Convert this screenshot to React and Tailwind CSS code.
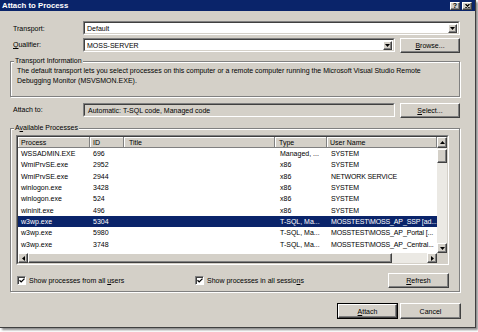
import React from "react";

const processes = [
  ["WSSADMIN.EXE", "696", "", "Managed, ...", "SYSTEM"],
  ["WmiPrvSE.exe", "2952", "", "x86", "SYSTEM"],
  ["WmiPrvSE.exe", "2944", "", "x86", "NETWORK SERVICE"],
  ["winlogon.exe", "3428", "", "x86", "SYSTEM"],
  ["winlogon.exe", "524", "", "x86", "SYSTEM"],
  ["wininit.exe", "496", "", "x86", "SYSTEM"],
  ["w3wp.exe", "5304", "", "T-SQL, Ma...", "MOSSTEST\\MOSS_AP_SSP [ad...", true],
  ["w3wp.exe", "5980", "", "T-SQL, Ma...", "MOSSTEST\\MOSS_AP_Portal [..."],
  ["w3wp.exe", "3748", "", "T-SQL, Ma...", "MOSSTEST\\MOSS_AP_Central..."],
  ["w3wp.exe", "2116", "", "x86", "MOSSTEST\\administrator"],
];

const Tri = ({ dir }) => {
  const side = dir === "left" || dir === "right";
  const pts = {
    down: "0,0 5,0 2.5,3",
    up: "0,3 5,3 2.5,0",
    left: "3,0 3,5 0,2.5",
    right: "0,0 0,5 3,2.5",
  }[dir];
  return (
    <svg width={side ? 3 : 5} height={side ? 5 : 3} viewBox={side ? "0 0 3 5" : "0 0 5 3"}>
      <polygon points={pts} fill="#000" />
    </svg>
  );
};

const Raised = ({ className = "", children }) => (
  <div
    className={`flex items-center justify-center bg-[#d4d0c8] border border-t-white border-l-white border-r-[#404040] border-b-[#404040] shadow-[inset_-1px_-1px_0_#808080] ${className}`}
  >
    {children}
  </div>
);

const Sunken = ({ className = "", inner = "bg-white", children }) => (
  <div className={`border border-t-[#808080] border-l-[#808080] border-b-white border-r-white ${className}`}>
    <div
      className={`w-full h-full border border-t-[#404040] border-l-[#404040] border-b-[#d4d0c8] border-r-[#d4d0c8] flex items-center ${inner}`}
    >
      {children}
    </div>
  </div>
);

const Combo = ({ className, value }) => (
  <Sunken className={className}>
    <span className="pl-[2px] leading-none">{value}</span>
    <Raised className="ml-auto mr-[1px] w-[9px] h-[9px]">
      <Tri dir="down" />
    </Raised>
  </Sunken>
);

const GroupBox = ({ title, className = "", children }) => (
  <div
    className={`relative border border-[#808080] shadow-[inset_1px_1px_0_#ffffff,1px_1px_0_#ffffff] ${className}`}
  >
    <span className="absolute top-[-5px] left-[3px] px-[1px] bg-[#d4d0c8] leading-[8px]">{title}</span>
    {children}
  </div>
);

const Check = () => (
  <div className="w-[9px] h-[9px] bg-white border border-t-[#808080] border-l-[#808080] border-b-white border-r-white shadow-[inset_1px_1px_0_#404040] flex items-center justify-center">
    <svg width="6" height="5" viewBox="0 0 6 5">
      <polyline points="0.5,2.2 2.2,3.9 5.5,0.6" stroke="#000" strokeWidth="1.3" fill="none" />
    </svg>
  </div>
);

const cols = "grid grid-cols-[72px_34px_151px_52px_110px]";

const HeaderCell = ({ children, pad = "pl-[3px]" }) => (
  <div
    className={`h-[11px] flex items-center ${pad} bg-[#d4d0c8] border-r border-b border-r-[#808080] border-b-[#808080] shadow-[inset_1px_1px_0_#ffffff] leading-none`}
  >
    {children}
  </div>
);

export default function App() {
  return (
    <div className="w-[478px] h-[332px] bg-white overflow-hidden font-['Liberation_Sans',Arial,sans-serif] text-[7px] text-black">
      <div className="w-[476px] h-[328px] bg-[#d4d0c8] border-r border-b border-[#404040] shadow-[2px_2px_2px_rgba(0,0,0,0.45)] flex flex-col">
        {/* title bar */}
        <div className="h-[11px] bg-[#0a246a] flex items-center pl-[2px] pr-[3px]">
          <span className="text-white font-bold text-[7.8px] leading-none">Attach to Process</span>
          <div className="ml-auto flex gap-[2px]">
            <Raised className="w-[10px] h-[8px]">
              <span className="font-bold text-[7px] leading-none">?</span>
            </Raised>
            <Raised className="w-[10px] h-[8px]">
              <svg width="5" height="4" viewBox="0 0 5 4">
                <path d="M0.5 0 L4.5 4 M4.5 0 L0.5 4" stroke="#000" strokeWidth="1.2" />
              </svg>
            </Raised>
          </div>
        </div>

        <div className="pl-[10px] flex flex-col">
          {/* transport */}
          <div className="mt-[10px] flex items-center pl-[3px]">
            <span className="w-[70px] leading-none">Transport:</span>
            <Combo className="w-[377px] h-[14px]" value="Default" />
          </div>

          {/* qualifier */}
          <div className="mt-[3px] flex items-start pl-[3px]">
            <span className="w-[70px] leading-[14px]">
              <u className="underline-offset-1">Q</u>ualifier:
            </span>
            <Combo className="w-[312px] h-[14px]" value="MOSS-SERVER" />
            <Raised className="ml-[5px] w-[60px] h-[15px]">
              <span className="leading-none">
                <u className="underline-offset-1">B</u>rowse...
              </span>
            </Raised>
          </div>

          {/* transport info */}
          <GroupBox title="Transport Information" className="mt-[8px] w-[450px] h-[36px]">
            <p className="pl-[6px] pt-[4px] leading-[9.5px]">
              The default transport lets you select processes on this computer or a remote computer running the
              Microsoft Visual Studio Remote
              <br />
              Debugging Monitor (MSVSMON.EXE).
            </p>
          </GroupBox>

          {/* attach to */}
          <div className="mt-[6px] flex items-start pl-[3px]">
            <span className="w-[70px] leading-[14px]">Attach to:</span>
            <Sunken className="w-[312px] h-[14px]" inner="bg-[#d4d0c8]">
              <span className="pl-[3px] leading-none">Automatic: T-SQL code, Managed code</span>
            </Sunken>
            <Raised className="ml-[5px] w-[60px] h-[15px]">
              <span className="leading-none">
                <u className="underline-offset-1">S</u>elect...
              </span>
            </Raised>
          </div>

          {/* available processes */}
          <GroupBox
            title={
              <>
                A<u className="underline-offset-1">v</u>ailable Processes
              </>
            }
            className="mt-[10px] w-[450px] h-[164px]"
          >
            <div className="pt-[6px] pl-[5px]">
              <Sunken className="w-[433px] h-[130px]" inner="bg-white items-stretch">
                <div className="w-[419px] flex flex-col">
                  <div className={cols}>
                    <HeaderCell>Process</HeaderCell>
                    <HeaderCell>ID</HeaderCell>
                    <HeaderCell pad="pl-[5px]">Title</HeaderCell>
                    <HeaderCell pad="pl-[4px]">Type</HeaderCell>
                    <HeaderCell pad="pl-[3px]">User Name</HeaderCell>
                  </div>
                  <div className="h-[105px] overflow-hidden">
                    {processes.map((p, i) => (
                      <div
                        key={i}
                        className={`${cols} h-[11.33px] leading-[11.33px] whitespace-nowrap ${
                          p[5] ? "bg-[#0a246a] text-white" : ""
                        }`}
                      >
                        <span className="pl-[3px] overflow-hidden">{p[0]}</span>
                        <span className="pl-[3px] overflow-hidden">{p[1]}</span>
                        <span className="pl-[5px] overflow-hidden">{p[2]}</span>
                        <span className="pl-[5px] overflow-hidden">{p[3]}</span>
                        <span className="pl-[4px] overflow-hidden tracking-[-0.15px]">{p[4]}</span>
                      </div>
                    ))}
                  </div>
                  <div className="h-[10px] flex bg-[#ebe9e4]">
                    <Raised className="w-[10px] h-[10px]">
                      <Tri dir="left" />
                    </Raised>
                    <Raised className="w-[364px] h-[10px]" />
                    <div className="flex-1" />
                    <Raised className="w-[10px] h-[10px]">
                      <Tri dir="right" />
                    </Raised>
                  </div>
                </div>
                <div className="w-[10px] flex flex-col">
                  <div className="h-[116px] flex flex-col bg-[#ebe9e4]">
                    <Raised className="w-[10px] h-[11px]">
                      <Tri dir="up" />
                    </Raised>
                    <Raised className="w-[10px] h-[14px] mt-[1px]" />
                    <div className="flex-1" />
                    <Raised className="w-[10px] h-[10px]">
                      <Tri dir="down" />
                    </Raised>
                  </div>
                  <div className="h-[10px] bg-[#d4d0c8]" />
                </div>
              </Sunken>

              <div className="mt-[8px] h-[14px] flex items-center">
                <div className="w-[179px] flex items-center pl-[1px] gap-[3px]">
                  <Check />
                  <span className="leading-none">
                    Show processes from all <u className="underline-offset-1">u</u>sers
                  </span>
                </div>
                <div className="w-[193px] flex items-center gap-[3px]">
                  <Check />
                  <span className="leading-none">
                    Show processes in all sessio<u className="underline-offset-1">n</u>s
                  </span>
                </div>
                <Raised className="w-[61px] h-[15px]">
                  <span className="leading-none">
                    <u className="underline-offset-1">R</u>efresh
                  </span>
                </Raised>
              </div>
            </div>
          </GroupBox>

          {/* dialog buttons */}
          <div className="mt-[11px] pl-[327px] flex gap-[2px]">
            <div className="w-[61px] h-[16px] border border-black">
              <Raised className="w-full h-full">
                <span className="leading-none">
                  <u className="underline-offset-1">A</u>ttach
                </span>
              </Raised>
            </div>
            <Raised className="w-[61px] h-[16px]">
              <span className="leading-none">Cancel</span>
            </Raised>
          </div>
        </div>
      </div>
    </div>
  );
}
